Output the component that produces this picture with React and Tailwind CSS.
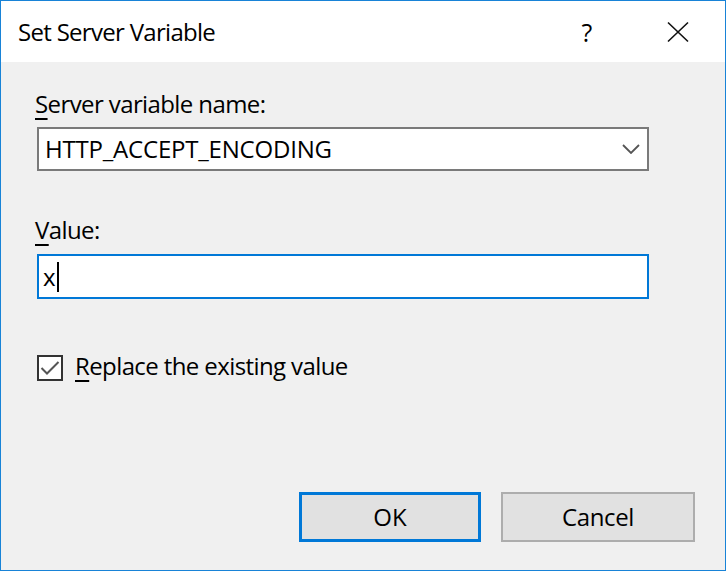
import React from "react";

export default function App() {
  return (
    <div
      className="w-[726px] h-[571px] border border-[#1883d7] flex flex-col bg-[#f0f0f0] text-black"
      style={{ fontFamily: '"Open Sans", "Noto Sans", sans-serif' }}
    >
      {/* Title bar */}
      <div className="h-[61px] bg-white flex items-center shrink-0">
        <div className="pl-[17px] text-[24px] leading-[32px] tracking-[-0.7px] flex-1">Set Server Variable</div>
        <div className="w-[90px] flex justify-center text-[25px] leading-[32px] pr-[6px]">?</div>
        <div className="w-[90px] flex justify-center pr-[4px]">
          <svg width="22" height="22" viewBox="0 0 22 22">
            <path d="M1 1.5 L21 20.5 M21 1.5 L1 20.5" stroke="#111" strokeWidth="1.6" fill="none" />
          </svg>
        </div>
      </div>

      {/* Body */}
      <div className="flex-1 flex flex-col pl-[36px] pr-[30px] pt-[26px] pb-[28px] text-[24px]">
        <div className="leading-[32px] h-[32px] -ml-[2px] tracking-[-0.6px]">
          <span className="underline underline-offset-[5px] decoration-[2px]">S</span>erver variable name:
        </div>
        <div className="mt-[7px] w-[612px] h-[44px] border-2 border-[#7a7a7a] bg-white flex items-center pl-[6px] pr-[7px]">
          <span className="flex-1 leading-[32px] tracking-[-0.2px]">HTTP_ACCEPT_ENCODING</span>
          <svg width="18" height="10" viewBox="0 0 18 10">
            <path d="M1 1 L9 9 L17 1" stroke="#555" strokeWidth="1.8" fill="none" />
          </svg>
        </div>

        <div className="mt-[43px] leading-[32px] h-[32px] -ml-[2px] tracking-[-0.6px]">
          <span className="underline underline-offset-[5px] decoration-[2px]">V</span>alue:
        </div>
        <div className="mt-[8px] w-[612px] h-[45px] border-2 border-[#0078d7] bg-white flex items-center pl-[4px]">
          <span className="leading-[32px]">x</span>
          <span className="w-[2px] h-[30px] bg-black ml-[1px]"></span>
        </div>

        <div className="mt-[55px] flex items-center">
          <div className="w-[26px] h-[26px] border-2 border-[#333333] bg-white flex items-center justify-center">
            <svg width="22" height="22" viewBox="0 0 22 22">
              <path d="M2.5 11 L8 16.5 L19.5 5" stroke="#555" strokeWidth="2" fill="none" />
            </svg>
          </div>
          <div className="ml-[12px] leading-[32px] tracking-[-0.6px] -mt-[4px]">
            <span className="underline underline-offset-[5px] decoration-[2px]">R</span>eplace the existing value
          </div>
        </div>

        <div className="mt-auto flex justify-end gap-[20px]">
          <button className="w-[182px] h-[50px] border-[3px] border-[#0078d7] bg-[#e1e1e1] text-[24px] leading-[32px]">
            OK
          </button>
          <button className="w-[194px] h-[50px] border-2 border-[#adadad] bg-[#e1e1e1] text-[24px] leading-[32px] tracking-[-0.4px]">
            Cancel
          </button>
        </div>
      </div>
    </div>
  );
}
